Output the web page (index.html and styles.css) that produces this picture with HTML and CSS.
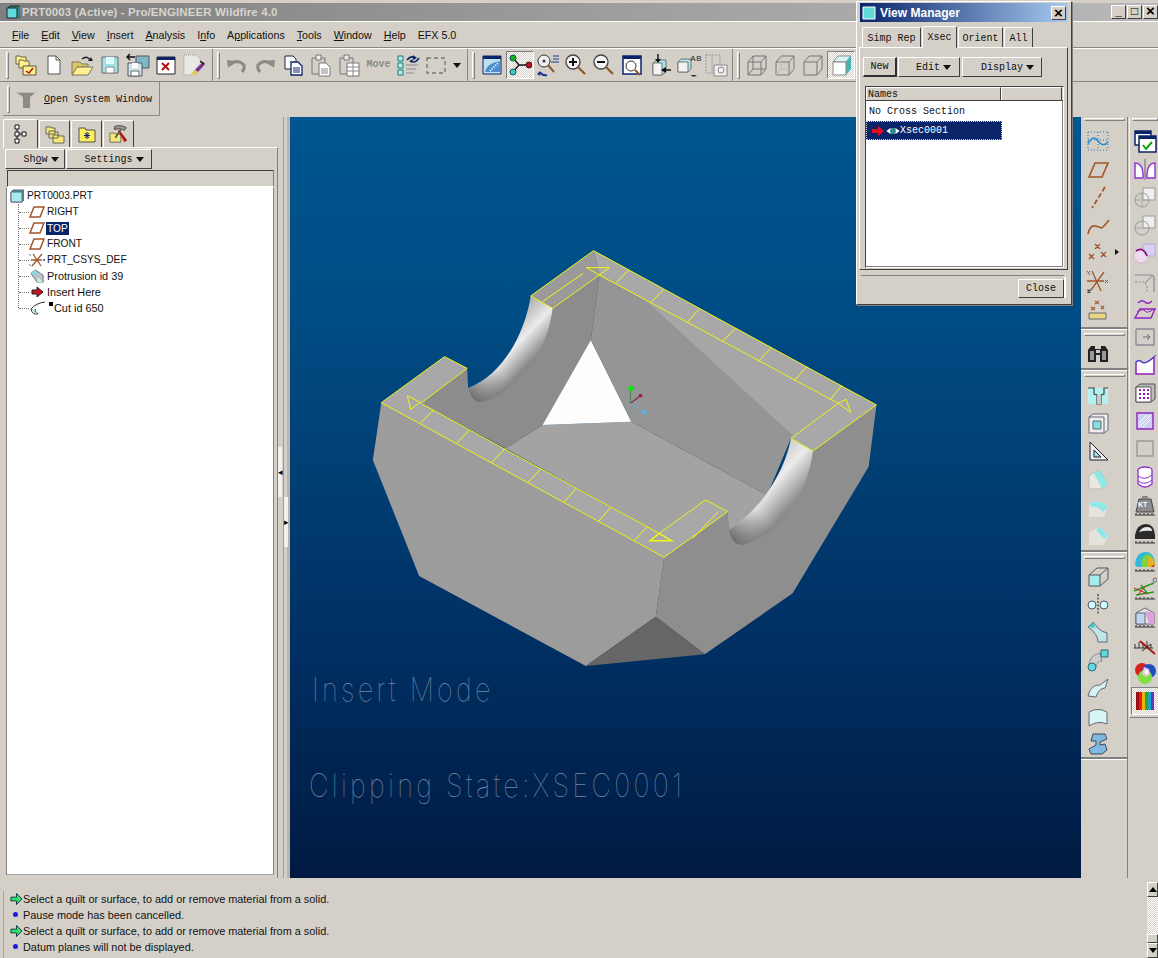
FILE: index.html
```html
<!DOCTYPE html>
<html lang="en">
<head>
<meta charset="utf-8">
<title>Pro/ENGINEER Wildfire 4.0</title>
<link rel="stylesheet" href="styles.css">
</head>
<body>
<div class="app">
  <header class="titlebar">
    <svg class="tico" viewBox="0 0 14 14"><path d="M2 3l2-2h11v10l-2 2" fill="#2a8a8a" stroke="#222"/><path d="M1 3h10v10H1z" fill="#63dada" stroke="#223"/></svg>
    <span class="titletext">PRT0003 (Active) - Pro/ENGINEER Wildfire 4.0</span>
    <div class="winbtns"><span class="wb">_</span><span class="wb">□</span><span class="wb wbx">×</span></div>
  </header>

  <nav class="menubar">
    <span><u>F</u>ile</span><span><u>E</u>dit</span><span><u>V</u>iew</span><span><u>I</u>nsert</span><span><u>A</u>nalysis</span><span>I<u>n</u>fo</span><span>A<u>p</u>plications</span><span><u>T</u>ools</span><span><u>W</u>indow</span><span><u>H</u>elp</span><span>EFX 5.0</span>
  </nav>

  <div class="toolrow">
    <div class="toolbar tb1">
      <i class="grip"></i>
      <b class="tbtn"><svg viewBox="0 0 24 24"><path d="M2 3h4l1 1h5v7H2z" fill="#ffef8a" stroke="#665"/><path d="M5 7h4l1 1h5v7H5z" fill="#ffef8a" stroke="#665"/><path d="M9 13h13v9H9z" fill="#ffef8a" stroke="#554"/><path d="M12 18l3 2 4-5" fill="none" stroke="#b01818" stroke-width="1.5"/></svg></b>
      <b class="tbtn"><svg viewBox="0 0 24 24"><path d="M6 3h8l4 4v14H6z" fill="#fff" stroke="#555"/><path d="M14 3v4h4" fill="none" stroke="#555"/></svg></b>
      <b class="tbtn"><svg viewBox="0 0 24 24"><path d="M2 9h8l2 2h6v3H7l-4 8H2z" fill="#e0c860" stroke="#776"/><path d="M7 14h16l-5 8H2z" fill="#ffef90" stroke="#776"/><path d="M12 6q5-4 8 1" fill="none" stroke="#222" stroke-width="1.4"/><path d="M18 8h5l-2-4z" fill="#222"/></svg></b>
      <b class="tbtn"><svg viewBox="0 0 24 24"><path d="M4 4h16v16H4z" fill="#a5e2e2" stroke="#667"/><path d="M8 4h8v7H8z" fill="#dff"/><path d="M8 14h8v6H8z" fill="#fff" stroke="#889"/></svg></b>
      <b class="tbtn"><svg viewBox="0 0 24 24"><path d="M10 3h13v12H10z" fill="#7fb8c4" stroke="#556"/><path d="M2 10h14v13H2z" fill="#cfe6e6" stroke="#556"/><path d="M6 10h6v5H6z" fill="#fff"/><path d="M5 18h8v5H5z" fill="#fff" stroke="#667"/><path d="M2 4h7M4 1L1 4l3 3" fill="none" stroke="#111" stroke-width="1.5"/></svg></b>
      <b class="tbtn"><svg viewBox="0 0 24 24"><path d="M3 4h18v17H3z" fill="#fff" stroke="#223"/><path d="M3 4h18v3H3z" fill="#0a246a"/><path d="M8 10l7 7m0-7l-7 7" stroke="#b01010" stroke-width="2"/></svg></b>
      <b class="tbtn"><svg viewBox="0 0 24 24"><path d="M2 2h12l6 6-11 14H2z" fill="#e8e8e4" stroke="#999" stroke-dasharray="1 1"/><path d="M21 9l2 2-7 8-3-2z" fill="#7a2a90"/><path d="M13 17l3 2-3 4-3-2z" fill="#e0d040"/><path d="M18 8l4 3" stroke="#111" stroke-width="1.5"/></svg></b>
    </div>
    <div class="toolbar tb2">
      <i class="grip"></i>
      <b class="tbtn"><svg viewBox="0 0 24 24"><path d="M5 12q7-7 14 0 1 4-2 7" fill="none" stroke="#8a8a86" stroke-width="3"/><path d="M2 7l9 1-8 7z" fill="#8a8a86"/></svg></b>
      <b class="tbtn"><svg viewBox="0 0 24 24"><path d="M19 12q-7-7-14 0-1 4 2 7" fill="none" stroke="#8a8a86" stroke-width="3"/><path d="M22 7l-9 1 8 7z" fill="#8a8a86"/></svg></b>
      <b class="tbtn"><svg viewBox="0 0 24 24"><path d="M4 3h8l3 3v10H4z" fill="#fff" stroke="#223"/><path d="M10 9h7l4 4v9H10z" fill="#fff" stroke="#0a246a" stroke-width="1.3"/><path d="M12 15h7m-7 2h7m-7 2h7" stroke="#0a246a"/></svg></b>
      <b class="tbtn"><svg viewBox="0 0 24 24"><path d="M3 5h13v16H3z" fill="#d4d0c8" stroke="#777"/><path d="M7 2h5v5H7z" fill="#eee" stroke="#777"/><path d="M10 10h7l4 4v9H10z" fill="#fff" stroke="#777"/><path d="M12 16h7m-7 2h7m-7 2h7" stroke="#888"/></svg></b>
      <b class="tbtn"><svg viewBox="0 0 24 24"><path d="M3 5h13v16H3z" fill="#d4d0c8" stroke="#777"/><path d="M7 2h5v5H7z" fill="#eee" stroke="#777"/><path d="M10 10h12v13H10z" fill="#fff" stroke="#777"/><path d="M10 14h12m-12 4h12M16 10v13" stroke="#888"/></svg></b>
      <b class="tbtn movebtn">Move</b>
      <b class="tbtn"><svg viewBox="0 0 24 24"><path d="M2 3h5v5H2zM2 10h5v5H2zM2 17h5v5H2z" fill="#bfe8e8" stroke="#0f7f7f"/><path d="M10 12h12m-12 4h10m-10 4h8" stroke="#889"/><path d="M11 7q4-5 8-2M23 5q-4 6-8 3" fill="none" stroke="#0a246a" stroke-width="1.5"/><path d="M17 2l4 3-4 2zM17 6l-4 2 3 2z" fill="#0a246a"/></svg></b>
      <b class="tbtn"><svg viewBox="0 0 24 24"><path d="M3 5h18v15H3z" fill="none" stroke="#777" stroke-width="1.4" stroke-dasharray="4 3"/></svg></b>
      <b class="tbtn tarrow"><em class="caret"></em></b>
    </div>
    <div class="toolbar tb3">
      <i class="grip"></i>
      <b class="tbtn"><svg viewBox="0 0 24 24"><path d="M3 3h18v18H3z" fill="#bfe0f0" stroke="#0a246a"/><path d="M3 3h18v3H3z" fill="#0a246a"/><path d="M5 19q2-9 15-11v11z" fill="#4a90d0"/><path d="M10 18l9-9" stroke="#fff" stroke-dasharray="1 1.5" stroke-width="2"/></svg></b>
      <b class="tbtn on"><svg viewBox="0 0 24 24"><path d="M5 5l6 7h10M11 12l-6 7" fill="none" stroke="#111" stroke-width="1.3"/><circle cx="5" cy="5" r="3" fill="#18b418" stroke="#155"/><circle cx="21" cy="12" r="3" fill="#c01020" stroke="#411"/><circle cx="5" cy="19" r="3" fill="#3cc8c8" stroke="#155"/></svg></b>
      <b class="tbtn"><svg viewBox="0 0 24 24"><circle cx="8" cy="8" r="6" fill="#eee" stroke="#333"/><circle cx="8" cy="8" r="1.5" fill="#333"/><path d="M12 12l6 7" stroke="#8b5a2b" stroke-width="2"/><path d="M17 3h6m-6 3h6m-8 3h8" stroke="#0a3a8a"/><path d="M4 19q2 4 7 3" fill="none" stroke="#1a3a9a" stroke-width="2"/><path d="M4 23v-5l-3 3z" fill="#1a3a9a"/></svg></b>
      <b class="tbtn"><svg viewBox="0 0 24 24"><circle cx="9" cy="9" r="7" fill="#f4f4f4" stroke="#444" stroke-width="1.3"/><path d="M5 9h8M9 5v8" stroke="#111" stroke-width="2"/><path d="M14 14l7 7" stroke="#8b5a2b" stroke-width="2.2"/></svg></b>
      <b class="tbtn"><svg viewBox="0 0 24 24"><circle cx="9" cy="9" r="7" fill="#f4f4f4" stroke="#444" stroke-width="1.3"/><path d="M5 9h8" stroke="#111" stroke-width="2"/><path d="M14 14l7 7" stroke="#8b5a2b" stroke-width="2.2"/></svg></b>
      <b class="tbtn"><svg viewBox="0 0 24 24"><path d="M3 3h18v18H3z" fill="#fff" stroke="#0a246a" stroke-width="1.5"/><path d="M3 3h18v3H3z" fill="#0a246a"/><circle cx="11" cy="13" r="5" fill="#fff" stroke="#333"/><path d="M15 17l5 5" stroke="#8b5a2b" stroke-width="2"/></svg></b>
      <b class="tbtn"><svg viewBox="0 0 24 24"><path d="M5 10l4-3h9v12l-4 3H5z" fill="#a5e6e6" stroke="#777"/><path d="M5 10h9v12H5z" fill="#f4f4f4" stroke="#777"/><path d="M10 1v7M14 17h9" stroke="#111" stroke-width="1.4"/><path d="M7 6h6l-3 4zM18 14v6l-5-3z" fill="#111"/></svg></b>
      <b class="tbtn abbtn"><svg viewBox="0 0 24 24"><path d="M2 9l3-3h10v10l-3 3H2z" fill="#a5e6e6" stroke="#777"/><path d="M2 9h10v10H2z" fill="#f4f4f4" stroke="#777"/><path d="M14 22h7l-3 2z" fill="#333"/></svg><em class="abtx">AB</em></b>
      <b class="tbtn"><svg viewBox="0 0 24 24"><path d="M2 2h14v18H2z" fill="none" stroke="#999" stroke-dasharray="2 1"/><path d="M8 2v18" stroke="#aaa"/><path d="M10 12h13v11H10z" fill="#eee" stroke="#888"/><circle cx="17" cy="17" r="3" fill="none" stroke="#888"/></svg></b>
    </div>
    <div class="toolbar tb4">
      <i class="grip"></i>
      <b class="tbtn"><svg viewBox="0 0 24 24"><path d="M3 9h13v13H3zM8 3h13v13H8zM3 9l5-6m8 6l5-6M3 22l5-6m8 6l5-6" fill="none" stroke="#777"/></svg></b>
      <b class="tbtn"><svg viewBox="0 0 24 24"><path d="M3 9h13v13H3zM16 9l5-6H8L3 9M21 3v13l-5 6" fill="none" stroke="#777"/><path d="M8 3v13H21M3 22l5-6" fill="none" stroke="#bbb"/></svg></b>
      <b class="tbtn"><svg viewBox="0 0 24 24"><path d="M3 9h13v13H3zM16 9l5-6H8L3 9M21 3v13l-5 6" fill="none" stroke="#777"/></svg></b>
      <b class="tbtn on"><svg viewBox="0 0 24 24"><path d="M4 9l5-6h13L17 9z" fill="#d8f6f6" stroke="#888"/><path d="M17 9l5-6v13l-5 6z" fill="#45b5b5"/><path d="M4 9h13v13H4z" fill="#fff" stroke="#888"/></svg></b>
    </div>
  </div>

  <div class="toolrow row2">
    <div class="toolbar sysbar">
      <i class="grip"></i>
      <svg class="sysicon" viewBox="0 0 24 24"><path d="M1 4h20l-6 5v11H8V9z" fill="#8a8a86"/><path d="M1 4h20l-1 1H3z" fill="#bbb"/></svg>
      <span class="mono"><u>O</u>pen System Window</span>
    </div>
  </div>

  <main class="main">
    <aside class="panel">
      <div class="tabs">
        <span class="ptab active"><svg viewBox="0 0 20 20"><path d="M4 1h4v4H4zM4 8h4v4H4zM4 15h4v4H4zM11 8h4v4h-4zM6 5v3M6 12v3M8 10h3" fill="#fff" stroke="#111"/></svg></span>
        <span class="ptab"><svg viewBox="0 0 20 20"><path d="M1 3h5l1 1h3v6H1zM4 7h5l1 1h3v6H4zM8 11h5l1 1h5v7H8z" fill="#f6e878" stroke="#665"/></svg></span>
        <span class="ptab"><svg viewBox="0 0 20 20"><path d="M2 4h6l1 2h9v12H2z" fill="#ffef60" stroke="#554"/><path d="M10 8v7M7 11.500h6M8 9l4 5M12 9l-4 5" stroke="#0a246a"/></svg></span>
        <span class="ptab"><svg viewBox="0 0 22 22"><path d="M1 10h5l1 1h6v9H1z" fill="#f6e878" stroke="#665"/><path d="M6 3q6-3 13 1l-2 3-5-2-6 1z" fill="#999" stroke="#444"/><path d="M11 6l9 12-3 2-7-12z" fill="#b01818"/><path d="M13 6l-6 9" stroke="#654" stroke-width="2"/></svg></span>
      </div>
      <div class="panelbody">
        <div class="btnrow">
          <span class="mbtn showbtn">Sh<u>o</u>w<em class="caret"></em></span>
          <span class="mbtn setbtn">Settings<em class="caret"></em></span>
        </div>
        <div class="treehead"></div>
        <div class="tree">
          <div class="troot"><svg viewBox="0 0 14 14"><path d="M1 3l2-2h11v10l-2 2H1z" fill="#3b9c9c" stroke="#667"/><path d="M1 3h11v10H1z" fill="#a5ecec" stroke="#667"/></svg><span class="caps">PRT0003.PRT</span></div>
          <ul class="tlist">
            <li><svg viewBox="0 0 16 14"><path d="M1 12L5 2h10l-4 10z" fill="#fff" stroke="#a0562a" stroke-width="1.5"/></svg><span class="caps">RIGHT</span></li>
            <li><svg viewBox="0 0 16 14"><path d="M1 12L5 2h10l-4 10z" fill="#fff" stroke="#a0562a" stroke-width="1.5"/></svg><span class="caps sel">TOP</span></li>
            <li><svg viewBox="0 0 16 14"><path d="M1 12L5 2h10l-4 10z" fill="#fff" stroke="#a0562a" stroke-width="1.5"/></svg><span class="caps">FRONT</span></li>
            <li><svg viewBox="0 0 16 14"><path d="M4 1l8 12M13 1L3 13M2 7h11" stroke="#a0562a" stroke-width="1.3"/><path d="M0 1l2 2m-2 8l2 2M14 6l2 2m0-2l-2 2" stroke="#777"/></svg><span class="caps">PRT_CSYS_DEF</span></li>
            <li><svg viewBox="0 0 16 16"><path d="M1 5l5-4 9 6v8H8z" fill="#b9c4c4" stroke="#667"/><path d="M1 5l5-4 2 3-3 3z" fill="#7fe0e0"/><path d="M8 15h7l-6-6z" fill="#c8eded"/></svg><span>Protrusion id 39</span></li>
            <li><svg viewBox="0 0 16 14" class="insarr"><path d="M3 5h5V2l6 5-6 5V9H3z" fill="#d01020" stroke="#222"/></svg><span>Insert Here</span></li>
            <li class="cut"><svg viewBox="0 0 18 16"><path d="M2 9q5-6 14-7M2 9q1 6 7 5q-3-2-3-5" fill="none" stroke="#333"/><path d="M3 9q2 4 6 4" fill="none" stroke="#6cc"/></svg><i class="cutdot"></i><span>Cut id 650</span></li>
          </ul>
        </div>
      </div>
    </aside>

    <div class="sash"><i class="sashbtn lft">◂</i><i class="sashbtn rgt">▸</i></div>

    <section class="viewport">
      <svg class="model" viewBox="290 117 791 761" aria-hidden="true">
        <defs>
          <linearGradient id="cylL" gradientUnits="userSpaceOnUse" x1="395" y1="270" x2="500" y2="370"><stop offset="0" stop-color="#a0a0a0"/><stop offset=".55" stop-color="#ececec"/><stop offset="1" stop-color="#8a8a8a"/></linearGradient>
          <linearGradient id="cylR" gradientUnits="userSpaceOnUse" x1="1120" y1="660" x2="1275" y2="800"><stop offset="0" stop-color="#a0a0a0"/><stop offset=".6" stop-color="#ececec"/><stop offset="1" stop-color="#8a8a8a"/></linearGradient>
          <linearGradient id="tipL" gradientUnits="userSpaceOnUse" x1="420" y1="405" x2="340" y2="480"><stop offset="0" stop-color="#777" stop-opacity="0"/><stop offset="1" stop-color="#707070"/></linearGradient>
          <linearGradient id="tipR" gradientUnits="userSpaceOnUse" x1="1190" y1="830" x2="1110" y2="905"><stop offset="0" stop-color="#777" stop-opacity="0"/><stop offset="1" stop-color="#707070"/></linearGradient>
        </defs>
        <g transform="translate(360 240) scale(.338 .3333)">
          <polygon fill="#8e8e8e" points="900,952 875,1130 1020,1243 1280,1060 1505,680 1528,495 1340,633 1130,915 1090,870 1088,815"/>
          <polygon fill="#9c9c9c" points="63,488 38,660 175,1008 668,1278 875,1130 900,952"/>
          <polygon fill="#666" points="875,1130 668,1278 1020,1243"/>
          <polygon fill="#a3a3a3" points="540,555 803,545 1205,765 1240,790 1150,880 1090,870 1088,815 1022,780 885,880 430,625"/>
          <polygon fill="#8c8c8c" points="570,205 708,105 683,300 540,555 430,625 180,490 317,385 320,445 360,487"/>
          <polygon fill="#fdfdfd" points="683,300 540,555 803,545"/>
          <polygon fill="#a6a6a6" points="708,105 1415,490 1275,595"/>
          <polygon fill="#959595" points="708,105 770,110 1285,590 1275,595 1205,765 803,545 683,300"/>
          <path fill="url(#cylL)" d="M505 168C490 270 430 400 320 445Q330 490 360 487C480 450 555 330 570 205Z"/>
          <path fill="url(#tipL)" d="M505 168C490 270 430 400 320 445Q330 490 360 487C480 450 555 330 570 205Z"/>
          <path fill="url(#cylR)" d="M1275 595C1260 680 1200 800 1090 870Q1100 915 1130 915C1240 890 1325 760 1340 633Z"/>
          <path fill="url(#tipR)" d="M1275 595C1260 680 1200 800 1090 870Q1100 915 1130 915C1240 890 1325 760 1340 633Z"/>
          <polygon fill="#a8a8a8" points="691,32 1528,495 1340,633 1275,595 1415,490 708,105"/>
          <polygon fill="#9a9a9a" points="505,168 691,32 708,105 570,205"/>
          <polygon fill="#a8a8a8" points="63,488 250,350 317,385 180,490 885,880 1022,780 1088,815 900,952"/>
          <g class="rim">
            <polygon points="505,168 691,32 1528,495 1340,633 1275,595 1415,490 708,105 570,205"/>
            <polygon points="63,488 250,350 317,385 180,490 885,880 1022,780 1088,815 900,952"/>
            <path d="M540 185L660 100M985 895L1060 815M180 548L218 510M285 610L322 572M390 667L430 625M497 727L535 687M603 787L640 745M707 843L742 802M812 902L850 860M758 128L795 90M860 188L897 150M968 248L1005 205M1072 305L1110 265M1178 365L1218 322M1285 422L1322 380M1390 480L1425 437"/>
            <polygon points="140,467 178,487 150,508"/>
            <polygon points="670,83 738,83 708,105"/>
            <polygon points="1438,478 1452,517 1415,490"/>
            <polygon class="rimb" points="885,880 922,902 858,902"/>
          </g>
          <path d="M800 490V445" stroke="#3a8a3a" stroke-width="3"/>
          <path d="M800 490L830 467" stroke="#8a1030" stroke-width="3"/>
          <path d="M800 490L842 517" stroke="#5ab0e0" stroke-width="3"/>
          <ellipse cx="802" cy="445" rx="9" ry="8" fill="#14e014"/>
          <ellipse cx="830" cy="467" rx="6" ry="5" fill="#a01838"/>
          <ellipse cx="842" cy="517" rx="7" ry="6" fill="#58b8ee"/>
        </g>
      </svg>
      <div class="ovl ovl1">Insert Mode</div>
      <div class="ovl ovl2">Clipping State:XSEC0001</div>
    </section>

    <aside class="rcol1">
      <div class="rgroup g1">
        <i class="rgrip"></i>
        <b class="rbtn"><svg viewBox="0 0 24 24"><path d="M2 3h20M2 11h20M2 21h20M2 3v18M22 3v18M12 3v18" stroke="#2a6ab0" stroke-dasharray="1 2" fill="none"/><path d="M2 15q5-10 10-3t10 1" fill="none" stroke="#2a8ad0" stroke-width="1.5"/></svg></b>
        <b class="rbtn"><svg viewBox="0 0 24 24"><path d="M3 20l6-14h13l-6 14z" fill="none" stroke="#a0562a" stroke-width="1.6"/></svg></b>
        <b class="rbtn"><svg viewBox="0 0 24 24"><path d="M19 2L6 23" stroke="#a0562a" stroke-width="1.8" stroke-dasharray="5 2.500"/></svg></b>
        <b class="rbtn"><svg viewBox="0 0 24 24"><path d="M2 21q2-9 7-8t6 2 8-8" fill="none" stroke="#a0562a" stroke-width="1.6"/></svg></b>
        <b class="rbtn"><svg viewBox="0 0 24 24"><path d="M9 3l5 5m0-5L9 8M3 13l5 5m0-5l-5 5M15 11l5 5m0-5l-5 5" stroke="#a0562a" stroke-width="1.4"/></svg><i class="rarrow"></i></b>
        <b class="rbtn"><svg viewBox="0 0 24 24"><path d="M6 2l9 20M18 3L5 21M1 12h17" stroke="#a0562a" stroke-width="1.3"/><path d="M1 2l3 4M4 2L2 4M1 21h4l-4 3h4M19 11l3 3m0-3l-3 3" stroke="#667"/></svg></b>
        <b class="rbtn"><svg viewBox="0 0 24 24"><path d="M9 4l4 3m0-3L9 7M15 9l3 3m0-3l-3 3M5 10l4 3m0-3l-4 3" stroke="#a0562a" stroke-width="1.200"/><path d="M3 16h17v6H3z" fill="#e8d880" stroke="#667"/></svg></b>
      </div>
      <div class="rgroup g2">
        <i class="rgrip"></i>
        <b class="rbtn"><svg viewBox="0 0 24 24"><path d="M2 10l3-4h4v3h6V6h4l3 4v12h-8v-7H10v7H2z" fill="#222"/><path d="M4 11h4v9H4zM16 11h4v9h-4z" fill="#999"/><path d="M10 10h4v3h-4z" fill="#ccc"/></svg></b>
      </div>
      <div class="rgroup g3">
        <i class="rgrip"></i>
        <b class="rbtn"><svg viewBox="0 0 24 24"><path d="M2 5h20v16H2z" fill="#b5f0f0"/><path d="M2 5h6v6l3 1v9h4v-9l3-1V5h4" fill="none" stroke="#444" stroke-width="1.200"/><path d="M11 12h4v9h-4z" fill="#c8c8c8"/></svg></b>
        <b class="rbtn"><svg viewBox="0 0 24 24"><path d="M3 6h15v16H3zM3 6l4-3h15v16l-4 3" fill="#eee" stroke="#667"/><path d="M7 10h8v8H7z" fill="#7fe0e0" stroke="#667"/></svg></b>
        <b class="rbtn"><svg viewBox="0 0 24 24"><path d="M4 3v18h18z" fill="#eee" stroke="#223"/><path d="M8 11v7h7z" fill="#9ee6e6" stroke="#223"/></svg></b>
        <b class="rbtn"><svg viewBox="0 0 24 24"><path d="M3 8l11-5 8 15-9 4H3z" fill="#e8e8e0" stroke="#bbb"/><path d="M14 3l8 15-6 3-8-14z" fill="#8ee8e8"/></svg></b>
        <b class="rbtn"><svg viewBox="0 0 24 24"><path d="M3 22V9q9-6 19 3l-4 10z" fill="#e4e4dc"/><path d="M3 9q9-6 19 3l-5 5q-5-6-10-5z" fill="#8ee8e8"/></svg></b>
        <b class="rbtn"><svg viewBox="0 0 24 24"><path d="M3 22V9l11-5 8 9-4 9z" fill="#e4e4dc"/><path d="M14 4l8 9-4 3-8-9z" fill="#8ee8e8"/></svg></b>
      </div>
      <div class="rgroup g4">
        <i class="rgrip"></i>
        <b class="rbtn"><svg viewBox="0 0 24 24"><path d="M3 11h11v11H3z" fill="#a5ecec" stroke="#556"/><path d="M3 11l8-7h11v11l-8 7M14 11l8-7" fill="none" stroke="#556"/></svg></b>
        <b class="rbtn"><svg viewBox="0 0 24 24"><circle cx="6" cy="13" r="4" fill="#cff" stroke="#556"/><circle cx="18" cy="13" r="4" fill="#cff" stroke="#556"/><path d="M12 2v21" stroke="#111" stroke-dasharray="2 1.500"/></svg></b>
        <b class="rbtn"><svg viewBox="0 0 24 24"><path d="M2 7l5-5 5 6q4 4 9 5v9H12q0-8-10-15z" fill="#bfe6e6" stroke="#667"/><path d="M2 7l5-5 2 6z" fill="#3cc8c8"/></svg></b>
        <b class="rbtn"><svg viewBox="0 0 24 24"><path d="M3 18q0-11 11-13l2 8q-5 0-6 6z" fill="#ccc" stroke="#889"/><circle cx="6" cy="19" r="4" fill="#5fdada" stroke="#367"/><path d="M15 2h7v7h-7z" fill="#5fdada" stroke="#367"/></svg></b>
        <b class="rbtn"><svg viewBox="0 0 24 24"><path d="M2 20q3-12 12-11l8-6-3 9q-6 0-9 9z" fill="#d8f2f2" stroke="#667"/></svg></b>
        <b class="rbtn"><svg viewBox="0 0 24 24"><path d="M3 8q9-5 18 0v12q-9-4-18 2z" fill="#d8f6f6" stroke="#667"/></svg></b>
        <b class="rbtn"><svg viewBox="0 0 24 24"><path d="M7 2h12l2 5-7 3v3l5-1 2 6-5 4H5l-2-5 7-4V9L5 9z" fill="#7fb8e0" stroke="#445"/></svg></b>
      </div>
    </aside>

    <aside class="rcol2">
      <i class="rgrip r2grip"></i>
      <b class="rbtn"><svg viewBox="0 0 24 24"><path d="M2 2h16v14H2z" fill="#fff" stroke="#0a246a" stroke-width="1.500"/><path d="M2 2h16v3H2z" fill="#0a246a"/><path d="M6 7h17v16H6z" fill="#fff" stroke="#0a246a" stroke-width="1.500"/><path d="M6 7h17v3H6z" fill="#0a246a"/><path d="M10 16l3 4 6-7" fill="none" stroke="#10a010" stroke-width="2"/></svg></b>
      <b class="rbtn"><svg viewBox="0 0 24 24"><path d="M2 21V6q7 0 8 10v5zM22 21V6q-7 0-8 10v5z" fill="#fff" stroke="#9030d0" stroke-width="1.400"/><path d="M12 2v21" stroke="#667"/></svg></b>
      <b class="rbtn"><svg viewBox="0 0 24 24"><path d="M10 3h12v12H10z" fill="#eee" stroke="#999"/><circle cx="9" cy="15" r="7" fill="none" stroke="#999"/><path d="M2 15h14M9 8v14" stroke="#aaa"/></svg></b>
      <b class="rbtn"><svg viewBox="0 0 24 24"><path d="M10 3h12v12H10z" fill="#eee" stroke="#999"/><circle cx="9" cy="15" r="7" fill="none" stroke="#999"/><path d="M2 15h14" stroke="#aaa"/></svg></b>
      <b class="rbtn"><svg viewBox="0 0 24 24"><path d="M10 3h12v12H10z" fill="#d8d0f0" stroke="#b8a8e0"/><circle cx="8" cy="15" r="7" fill="#ecdcec" stroke="#d8b0d8"/><path d="M3 10q7-5 11 5" fill="none" stroke="#801080" stroke-width="1.600"/></svg></b>
      <b class="rbtn"><svg viewBox="0 0 24 24"><path d="M2 6h17l2 2v15" fill="none" stroke="#889" stroke-width="1.200"/><path d="M2 13h9l3 4v6" fill="none" stroke="#889" stroke-dasharray="2 1.500"/><path d="M12 14l7-7" stroke="#889"/></svg></b>
      <b class="rbtn"><svg viewBox="0 0 24 24"><path d="M5 6q4-4 7-1t7-1M2 21l5-9h15l-4 9z" fill="none" stroke="#9020c0" stroke-width="1.400"/><path d="M4 15q6-4 8-1t9-2" fill="none" stroke="#9020c0"/></svg></b>
      <b class="rbtn"><svg viewBox="0 0 24 24"><path d="M3 4v16M3 4h18v16H3" fill="none" stroke="#889" stroke-width="1.300"/><path d="M10 12h7m-3-3l3 3-3 3" fill="none" stroke="#667"/></svg></b>
      <b class="rbtn"><svg viewBox="0 0 24 24"><path d="M3 9q3-3 6 0t12-5v17H3z" fill="#fff" stroke="#9020c0" stroke-width="1.500"/><path d="M3 9q3-3 6 0t12-5l2-2" fill="none" stroke="#2050d0"/></svg></b>
      <b class="rbtn"><svg viewBox="0 0 24 24"><path d="M3 6l4-3h15v15l-4 3H3z" fill="#bbb" stroke="#555"/><path d="M3 6h15v15H3z" fill="#fff" stroke="#555"/><path d="M6 9h2m2 0h2m2 0h2M6 13h2m2 0h2m2 0h2M6 17h2m2 0h2m2 0h2" stroke="#9020c0" stroke-width="2"/></svg></b>
      <b class="rbtn"><svg viewBox="0 0 24 24"><path d="M4 4h16v16H4z" fill="#cdd0f4" stroke="#9020c0" stroke-width="1.400"/><path d="M6 18L18 6M10 18l8-8M6 14l8-8" stroke="#fff"/></svg></b>
      <b class="rbtn"><svg viewBox="0 0 24 24"><path d="M4 4h16v15H4z" fill="none" stroke="#999" stroke-width="1.400"/></svg></b>
      <b class="rbtn"><svg viewBox="0 0 24 24"><ellipse cx="12" cy="5" rx="7" ry="3" fill="#fff" stroke="#9030d0" stroke-width="1.300"/><path d="M5 5v14q7 6 14 0V5" fill="#fff" stroke="#9030d0" stroke-width="1.300"/><path d="M5 11q7 5 14-1M5 16q7 5 14-1" fill="none" stroke="#9030d0"/></svg></b>
      <b class="rbtn kgbtn"><svg viewBox="0 0 24 24"><path d="M9 4h6M6 6h12l3 13H3z" fill="#8c8c8c" stroke="#444"/><path d="M2 22h20M3 20v2M7 20v2M11 20v2M15 20v2M19 20v2" stroke="#333"/></svg><em class="kgtx">KT</em></b>
      <b class="rbtn"><svg viewBox="0 0 24 24"><path d="M2 14q2-11 11-11 8 0 9 11v4H2z" fill="#2a2a2a"/><path d="M6 11q3-5 8-5t5 4q-7-1-13 1z" fill="#e8e8e8"/><path d="M2 22h20M3 20v2M7 20v2M11 20v2M15 20v2M19 20v2" stroke="#333"/></svg></b>
      <b class="rbtn"><svg viewBox="0 0 24 24"><path d="M2 16q1-13 11-13 8 0 9 12l-2 3H4z" fill="#30b8d8"/><path d="M8 16q0-9 7-11 6 3 7 10l-2 3H8z" fill="#80d040"/><path d="M14 17q0-8 4-9 3 3 4 7l-2 3h-6z" fill="#e8b020"/><path d="M18 18l4-3-1 3z" fill="#c02020"/><path d="M2 22h20M3 20v2M7 20v2M11 20v2M15 20v2M19 20v2" stroke="#333"/></svg></b>
      <b class="rbtn"><svg viewBox="0 0 24 24"><path d="M1 14l20-8M3 18l18-3M8 8l6 8" stroke="#20a020" stroke-width="1.400"/><path d="M1 11l14 6M12 9l-7 9" stroke="#c02020"/><circle cx="22" cy="3" r="2" fill="none" stroke="#667"/><path d="M2 22h20M3 20v2M7 20v2M11 20v2M15 20v2M19 20v2" stroke="#333"/></svg></b>
      <b class="rbtn"><svg viewBox="0 0 24 24"><path d="M3 8l9-5 9 5v11H3z" fill="#e6e6e6" stroke="#667"/><path d="M12 6l9 2v11h-5z" fill="#e0a0e0"/><path d="M3 8h9v11H3z" fill="#bfd8f0" stroke="#667"/><path d="M2 22h20M3 20v2M7 20v2M11 20v2M15 20v2M19 20v2" stroke="#333"/></svg></b>
      <b class="rbtn"><svg viewBox="0 0 24 24"><path d="M1 15h19M2 11v4M6 9v6M10 11v4M14 8v7M18 11v4" stroke="#333"/><path d="M7 8l15 13" stroke="#a01818" stroke-width="2"/><path d="M9 18l9-7" stroke="#222"/></svg></b>
      <b class="rbtn"><svg viewBox="0 0 24 24"><circle cx="9" cy="9" r="7" fill="#d82020"/><circle cx="16" cy="10" r="7" fill="#2050c0"/><circle cx="12" cy="16" r="7" fill="#80e040"/><path d="M11 6l5 2 1 5-4 3-4-3z" fill="#e8c8e8"/><path d="M12 9h3v4h-3z" fill="#fff"/></svg></b>
      <b class="rbtn on"><svg viewBox="0 0 24 24"><path d="M3 3h3v18H3z" fill="#9a1010"/><path d="M6 3h3v18H6z" fill="#e02010"/><path d="M9 3h3v18H9z" fill="#f0b010"/><path d="M12 3h3v18h-3z" fill="#20b020"/><path d="M15 3h3v18h-3z" fill="#20a0d0"/><path d="M18 3h3v18h-3z" fill="#7030c0"/></svg></b>
    </aside>
  </main>

  <footer class="msg">
    <div class="msglines">
      <p><svg class="marr" viewBox="0 0 14 14"><path d="M1 5h6V1l6 6-6 6V9H1z" fill="#30e060" stroke="#134"/></svg>Select a quilt or surface, to add or remove material from a solid.</p>
      <p><i class="mdot"></i>Pause mode has been cancelled.</p>
      <p><svg class="marr" viewBox="0 0 14 14"><path d="M1 5h6V1l6 6-6 6V9H1z" fill="#30e060" stroke="#134"/></svg>Select a quilt or surface, to add or remove material from a solid.</p>
      <p><i class="mdot"></i>Datum planes will not be displayed.</p>
    </div>
    <div class="scroll"><b class="sbtn sup"></b><i class="strack"></i><i class="sthumb"></i><b class="sbtn sdn"></b></div>
  </footer>

  <div class="dialog">
    <div class="dtitle">
      <svg class="tico" viewBox="0 0 14 14"><path d="M1 1h12v12H1z" fill="#63dada" stroke="#fff"/></svg>
      <span>View Manager</span>
      <b class="dclose">×</b>
    </div>
    <div class="dtabs">
      <span class="dtab t1">Simp Rep</span><span class="dtab t2 active">Xsec</span><span class="dtab t3">Orient</span><span class="dtab t4">All</span>
    </div>
    <div class="dbody">
      <div class="dbtns">
        <span class="mbtn dnew">New</span>
        <span class="mbtn dedit">Edit<em class="caret"></em></span>
        <span class="mbtn ddisp">Display<em class="caret"></em></span>
      </div>
      <div class="dlist">
        <div class="dhead"><span class="dh1">Names</span><span class="dh2"></span></div>
        <div class="drow">No Cross Section</div>
        <div class="drow dsel">
          <svg viewBox="0 0 14 12" class="darr"><path d="M1 4h6V1l6 5-6 5V8H1z" fill="#e01020"/></svg>
          <svg viewBox="0 0 16 12" class="deye"><path d="M0 6l4-3h8l4 3-4 3H4z" fill="#fff"/><circle cx="8" cy="6" r="3.500" fill="#2a8a8a"/></svg>
          <span>Xsec0001</span>
        </div>
      </div>
    </div>
    <div class="dfoot"><span class="mbtn dcl">Close</span></div>
  </div>
</div>
</body>
</html>
```
FILE: styles.css
```css
* { box-sizing: border-box; }
html, body { margin: 0; padding: 0; }
body { background: #d4d0c8; font: 10.900px/16px "Liberation Sans", Arial, sans-serif; color: #111; overflow: hidden; }
.app { position: relative; width: 1158px; height: 958px; overflow: hidden; background: #d4d0c8; display: flex; flex-direction: column; }
b, i, em { font-weight: normal; font-style: normal; }

.titlebar { margin-top: 3px; height: 18px; flex: none; display: flex; align-items: center; padding-left: 6px; background: linear-gradient(90deg, #7f7f7f, #a2a2a2 60%, #b8b8b8); }
.tico { width: 14px; height: 14px; flex: none; margin-right: 2px; }
.titletext { color: #d8d5cd; font-weight: bold; font-size: 11.500px; letter-spacing: .1px; }
.winbtns { margin-left: auto; display: flex; gap: 1px; align-self: flex-start; margin-top: 2px; }
.wb { width: 15px; height: 14px; background: #d4d0c8; border: 1px solid; border-color: #fff #404040 #404040 #fff; font: bold 12px/10px "Liberation Sans", sans-serif; text-align: center; color: #000; }
.wbx { font-size: 15px; }

.menubar { flex: none; height: 27px; padding: 1px 0 0 12px; display: flex; align-items: center; gap: 12px; border-top: 1px solid #fff; border-bottom: 1px solid #8a8884; font-size: 10.700px; }

.toolrow { flex: none; height: 34px; display: flex; border-top: 1px solid #fff; border-bottom: 1px solid #8a8884; }
.row2 { height: 35px; border-top: 0; border-bottom: 0; }
.toolbar { display: flex; align-items: center; height: 100%; padding-left: 4px; border-right: 1px solid #8a8884; }
.tb1 { width: 210px; margin-left: 3px; padding-left: 3px; }
.tb2 { width: 255px; }
.tb3 { width: 265px; }
.tb4 { flex: 1; border-right: 0; }
.grip { flex: none; width: 3px; height: 27px; margin-right: 3px; border: 1px solid; border-color: #fff #808080 #808080 #fff; }
.tbtn { flex: none; width: 28px; height: 28px; display: flex; align-items: center; justify-content: center; }
.tbtn svg { width: 24px; height: 24px; display: block; }
.tbtn.on, .rbtn.on { background-color: #eceae4; background-image: repeating-conic-gradient(#d4d0c8 0 25%, #fff 0 50%); background-size: 2px 2px; border: 1px solid; border-color: #808080 #fff #fff #808080; }
.movebtn { width: 31px; font: bold 10px/28px "Liberation Mono", monospace; color: #8a8a86; }
.tarrow { width: 14px; }
.tarrow .caret { margin-left: 0; }
.abbtn, .kgbtn { position: relative; }
.abtx { position: absolute; right: 0; top: 3px; font: 8px/9px "Liberation Sans", sans-serif; color: #222; letter-spacing: .5px; }
.kgtx { position: absolute; left: 7px; top: 10px; font: bold 7px/8px "Liberation Sans", sans-serif; color: #fff; }
.sysbar { width: 157px; height: 34px; margin-left: 3px; padding-top: 2px; border-bottom: 1px solid #8a8884; }
.sysicon { width: 24px; height: 24px; flex: none; margin: 0 5px 0 2px; }
.mono { font: 10px/16px "Liberation Mono", "DejaVu Sans Mono", monospace; white-space: nowrap; }

.main { flex: none; height: 761px; display: flex; }
.panel { flex: none; width: 275px; margin-left: 3px; display: flex; flex-direction: column; }
.tabs { flex: none; height: 30px; display: flex; padding-top: 1px; align-items: flex-end; }
.ptab { width: 31px; height: 27px; margin-right: 1px; display: flex; align-items: center; justify-content: center; border: 1px solid; border-color: #fff #404040 transparent #fff; border-bottom: 0; border-radius: 2px 2px 0 0; }
.ptab svg { width: 20px; height: 20px; }
.ptab.active { height: 29px; width: 35px; margin-bottom: -1px; background: #d4d0c8; position: relative; z-index: 1; }
.panelbody { flex: 1; min-height: 0; display: flex; flex-direction: column; border-top: 1px solid #fff; border-right: 1px solid #808080; padding: 1px 1px 3px 2px; }
.btnrow { flex: none; display: flex; gap: 1px; height: 20px; margin-bottom: 1px; }
.mbtn { display: inline-flex; align-items: center; justify-content: center; height: 20px; padding-top: 1px; border: 1px solid; border-color: #fff #404040 #404040 #fff; font: 10px/16px "Liberation Mono", "DejaVu Sans Mono", monospace; white-space: pre; background: #d4d0c8; color: #111; }
.showbtn { width: 60px; padding-left: 12px; }
.setbtn { width: 86px; padding-left: 10px; }
.caret { display: inline-block; width: 0; height: 0; margin-left: 3px; border: 4px solid transparent; border-top: 5px solid #111; border-bottom: 0; }
.treehead { flex: none; height: 17px; margin-left: 2px; margin-right: 2px; border: 1px solid; border-color: #404040 #808080 #fff #404040; background: #d4d0c8; }
.tree { flex: 1; min-height: 0; margin-left: 1px; margin-right: 2px; background: #fff; border: 1px solid; border-color: #fff #808080 #a8a8a8 #808080; padding: 0 0 0 3px; }
.troot { height: 16px; display: flex; align-items: center; gap: 3px; }
.troot svg { width: 14px; height: 14px; flex: none; }
.caps { font-size: 10.200px; }
.tlist { list-style: none; margin: 0 0 0 8px; padding: 0; border-left: 1px dotted #777; height: 104px; }
.tlist li { height: 16px; display: flex; align-items: center; padding-left: 10px; position: relative; }
.tlist li::before { content: ""; width: 10px; border-top: 1px dotted #777; position: absolute; left: 0; top: 8px; }
.tlist svg { width: 16px; height: 14px; flex: none; margin-right: 2px; }
.tlist .cut svg { width: 18px; height: 16px; margin-right: 2px; }
.cutdot { width: 4px; height: 4px; background: #000; margin: -8px 1px 0 0; }
.sel { background: #0a246a; color: #fff; padding: 0 1px; margin-left: -1px; line-height: 13px; }

.sash { flex: none; width: 12px; display: flex; flex-direction: column; border-right: 3px solid #b8b6ae; background: linear-gradient(90deg, #d4d0c8 5px, #9c9a94 5px, #9c9a94 6px, #d4d0c8 6px); padding-top: 330px; }
.sashbtn { display: flex; align-items: center; justify-content: center; font-size: 9px; line-height: 9px; color: #000; background: #f2f1ec; }
.sashbtn.lft { width: 4px; height: 50px; }
.sashbtn.rgt { width: 4px; height: 50px; margin-left: 6px; }

.viewport { flex: none; width: 791px; position: relative; background: linear-gradient(180deg, #005690 0%, #004d85 25%, #002f62 70%, #001a42 100%); }
.model { position: absolute; left: 0; top: 0; width: 791px; height: 761px; }
.rim polygon, .rim path { fill: none; stroke: #f6f614; stroke-width: 1; vector-effect: non-scaling-stroke; }
.rim .rimb { stroke-width: 1.500; }
.ovl { position: absolute; color: #7688a0; font-family: Inter, "Liberation Sans", sans-serif; font-weight: 100; white-space: nowrap; line-height: 30px; font-size: 27px; letter-spacing: 3.300px; transform: scaleY(1.200); }
.ovl1 { left: 22px; top: 558px; }
.ovl2 { left: 19px; top: 654px; }

.rcol1 { flex: none; width: 47px; display: flex; flex-direction: column; border-right: 1px solid #808080; }
.rgroup { display: flex; flex-direction: column; align-items: flex-start; border-bottom: 2px solid #808080; box-shadow: 0 1px 0 #fff; margin-bottom: 1px; }
.rcol1 .rbtn { margin-left: 3px; }
.g1 { height: 212px; }
.g1 .rgrip { margin: 1px 0 6px 3px; }
.g2 { height: 40px; }
.g3 { height: 181px; }
.g4 { height: 206px; margin-bottom: 0; }
.rgrip { flex: none; width: 41px; height: 3px; margin: 3px 0 2px 3px; border: 1px solid; border-color: #fff #808080 #808080 #fff; }
.g3 .rgrip { margin-bottom: 4px; }
.g4 .rgrip { margin-bottom: 3px; }
.rbtn { flex: none; width: 28px; height: 28px; display: flex; align-items: center; justify-content: center; position: relative; }
.rbtn svg { width: 24px; height: 24px; display: block; }
.rarrow { position: absolute; right: -7px; top: 10px; width: 0; height: 0; border: 3px solid transparent; border-left: 4px solid #111; border-right: 0; }
.rcol2 { flex: none; width: 29px; height: 601px; margin-left: 1px; display: flex; flex-direction: column; align-items: flex-start; border-left: 1px solid #f4f4f0; border-bottom: 1px solid #808080; }
.r2grip { width: 26px; margin: 1px 0 6px 2px; }
.rcol2 .rbtn { margin-left: 1px; }

.msg { flex: 1; min-height: 0; display: flex; border-left: 3px solid transparent; }
.msglines { flex: 1; margin-top: 13px; border-left: 1px solid #a8a6a0; padding-left: 19px; }
.msglines p { margin: 0; height: 16px; line-height: 16px; white-space: nowrap; position: relative; }
.marr { position: absolute; left: -13px; top: 1px; width: 13px; height: 14px; }
.mdot { position: absolute; left: -10px; top: 5px; width: 5px; height: 5px; border-radius: 50%; background: #1a1ae0; }
.scroll { flex: none; width: 11px; margin-top: 4px; display: flex; flex-direction: column; }
.sbtn { flex: none; height: 15px; display: flex; align-items: center; justify-content: center; border: 1px solid; border-color: #fff #404040 #404040 #fff; }
.sbtn::after { content: ""; border: 4px solid transparent; }
.sup::after { border-bottom: 5px solid #000; border-top: 0; }
.sdn::after { border-top: 5px solid #000; border-bottom: 0; }
.strack { flex: 1; background-image: repeating-conic-gradient(#d4d0c8 0 25%, #fff 0 50%); background-size: 2px 2px; }
.sthumb { flex: none; height: 9px; border: 1px solid; border-color: #fff #404040 #404040 #fff; }

.dialog { position: absolute; left: 856px; top: 1px; width: 216px; height: 304px; background: #d4d0c8; border: 1px solid; border-color: #fff #404040 #404040 #fff; padding: 1px; display: flex; flex-direction: column; box-shadow: 1px 1px 0 #808080; }
.dtitle { flex: none; height: 19px; margin: 0 2px; display: flex; align-items: center; padding-left: 2px; gap: 2px; background: linear-gradient(90deg, #0a246a, #a6caf0); color: #fff; font-weight: bold; font-size: 12px; }
.dclose { margin-left: auto; margin-right: 2px; width: 15px; height: 14px; background: #d4d0c8; border: 1px solid; border-color: #fff #404040 #404040 #fff; color: #000; font: bold 15px/11px "Liberation Sans", sans-serif; text-align: center; }
.dtabs { flex: none; height: 25px; padding: 4px 0 0 4px; display: flex; align-items: flex-end; gap: 1px; }
.dtab { height: 20px; padding-top: 3px; display: flex; align-items: center; justify-content: center; border: 1px solid; border-color: #fff #404040 transparent #fff; border-bottom: 0; border-radius: 2px 2px 0 0; font: 10px/14px "Liberation Mono", "DejaVu Sans Mono", monospace; }
.t1 { width: 59px; }
.t2 { width: 35px; height: 22px; padding-top: 0; margin-bottom: -1px; background: #d4d0c8; position: relative; z-index: 1; }
.t3 { width: 45px; }
.t4 { width: 29px; }
.dbody { flex: none; height: 223px; margin: 0 2px 0 1px; border: 1px solid; border-color: #fff #404040 #404040 #fff; padding: 9px 3px 1px 3px; display: flex; flex-direction: column; }
.dbtns { flex: none; display: flex; gap: 1px; height: 20px; margin-bottom: 9px; }
.dnew { width: 34px; border-color: #fff #303030 #303030 #fff; border-width: 1px 2px 2px 1px; }
.dedit { width: 62px; padding-left: 9px; }
.ddisp { width: 80px; margin-left: 1px; padding-left: 11px; }
.dlist { flex: 1; margin: 0 0 0 2px; background: #fff; border: 1px solid; border-color: #404040 #fff #fff #404040; box-shadow: inset -1px -1px 0 #808080; font: 10px/16px "Liberation Mono", "DejaVu Sans Mono", monospace; }
.dhead { height: 14px; display: flex; background: #d4d0c8; border-bottom: 1px solid #404040; }
.dh1 { width: 135px; line-height: 13px; padding-left: 1px; border: 1px solid; border-color: #fff #404040 transparent #fff; border-bottom: 0; }
.dh2 { flex: 1; margin-right: 1px; border: 1px solid; border-color: #fff #404040 transparent #fff; border-bottom: 0; }
.drow { height: 19px; padding-left: 3px; display: flex; align-items: center; margin-top: 1px; white-space: pre; }
.dsel { width: 136px; height: 19px; padding: 0 0 0 4px; margin-top: 0; background: #0a246a; color: #fff; border: 1px dotted #d4d0c8; }
.darr { width: 14px; height: 12px; flex: none; margin-right: 1px; }
.deye { width: 14px; height: 10px; flex: none; }
.dfoot { flex: none; margin: 5px 6px 0 3px; padding-top: 3px; display: flex; justify-content: flex-end; border-top: 1px solid #808080; box-shadow: 3px 1px 0 -1px #fff; }
.dcl { width: 46px; height: 19px; }
```
